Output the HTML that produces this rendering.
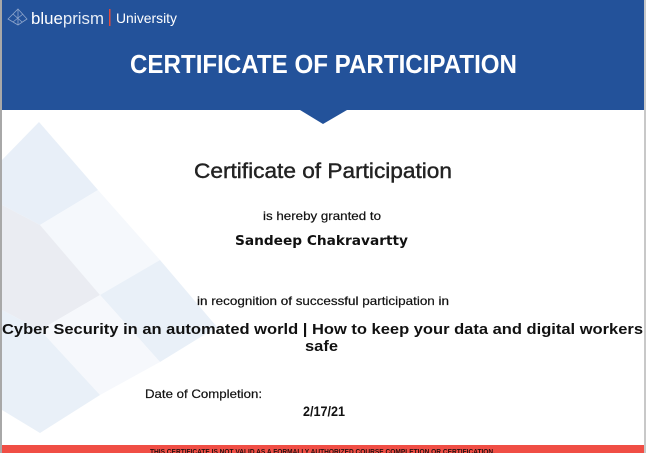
<!DOCTYPE html>
<html><head><meta charset="utf-8"><style>
html,body{margin:0;padding:0;background:#fff;width:646px;height:453px;overflow:hidden}
svg{display:block}
</style></head><body>
<svg width="646" height="453" viewBox="0 0 646 453" xmlns="http://www.w3.org/2000/svg">
<rect width="646" height="453" fill="#fff"/>
<polygon points="39,122 98,190 40,225 2,205 2,160" fill="#e8eff8"/>
<polygon points="98,190 160,260 100,295 40,225" fill="#f5f8fc"/>
<polygon points="2,205 40,225 100,295 40,330 2,310" fill="#eaecf2"/>
<polygon points="160,260 217,327 160,362 100,295" fill="#e9f0f8"/>
<polygon points="100,295 160,362 100,395 40,330" fill="#f6f8fc"/>
<polygon points="2,310 40,330 100,395 40,433 2,410" fill="#e9f0f8"/>
<rect x="0" y="0" width="2" height="453" fill="#a8a8a8"/>
<rect x="644" y="0" width="2" height="453" fill="#c8c8c8"/>
<rect x="2" y="0" width="642" height="110" fill="#23529a"/>
<polygon points="300,110 347,110 323,124" fill="#23529a"/>
<g stroke="#8fa6cc" stroke-width="0.8" fill="none">
<polygon points="18,9 27,19 18,25 8,19"/>
<line x1="18" y1="9" x2="18" y2="25"/><line x1="13" y1="14" x2="22" y2="22"/><line x1="23" y1="14" x2="13" y2="22"/>
</g>
<text x="31" y="24" font-family="Liberation Sans, sans-serif" font-size="17" fill="#fff" textLength="73" lengthAdjust="spacingAndGlyphs">blue<tspan fill="#e6ecf5">prism</tspan></text>
<rect x="109" y="9" width="1.5" height="17" fill="#e04a3f"/>
<text x="116" y="23" font-family="Liberation Sans, sans-serif" font-size="14" fill="#fff" textLength="61" lengthAdjust="spacingAndGlyphs">University</text>
<text x="130" y="73" font-family="Liberation Sans, sans-serif" font-weight="bold" font-size="26" fill="#fff" textLength="387" lengthAdjust="spacingAndGlyphs">CERTIFICATE OF  PARTICIPATION</text>
<text x="194" y="178" font-family="Liberation Sans, sans-serif" font-size="21" fill="#222" stroke="#222" stroke-width="0.4" textLength="258" lengthAdjust="spacingAndGlyphs">Certificate of Participation</text>
<text x="263" y="220" font-family="Liberation Sans, sans-serif" font-size="12" fill="#111" stroke="#111" stroke-width="0.2" textLength="118" lengthAdjust="spacingAndGlyphs">is hereby granted to</text>
<text x="235" y="245" font-family="DejaVu Sans, sans-serif" font-weight="bold" font-size="13" fill="#111" textLength="173" lengthAdjust="spacingAndGlyphs">Sandeep Chakravartty</text>
<text x="197" y="305" font-family="Liberation Sans, sans-serif" font-size="12" fill="#111" stroke="#111" stroke-width="0.2" textLength="252" lengthAdjust="spacingAndGlyphs">in recognition of successful participation in</text>
<text x="2" y="334" font-family="Liberation Sans, sans-serif" font-weight="bold" font-size="15" fill="#111" textLength="641" lengthAdjust="spacingAndGlyphs">Cyber Security in an automated world | How to keep your data and digital workers</text>
<text x="305" y="351" font-family="Liberation Sans, sans-serif" font-weight="bold" font-size="15" fill="#111" textLength="33" lengthAdjust="spacingAndGlyphs">safe</text>
<text x="145" y="398" font-family="Liberation Sans, sans-serif" font-size="12" fill="#111" stroke="#111" stroke-width="0.2" textLength="117" lengthAdjust="spacingAndGlyphs">Date of Completion:</text>
<text x="303" y="416" font-family="Liberation Sans, sans-serif" font-weight="bold" font-size="14" fill="#111" textLength="42" lengthAdjust="spacingAndGlyphs">2/17/21</text>
<rect x="2" y="445" width="642" height="8" fill="#f04e45"/>
<text x="150" y="454" font-family="Liberation Sans, sans-serif" font-weight="bold" font-size="7.5" fill="#2a1010" textLength="345" lengthAdjust="spacingAndGlyphs">THIS CERTIFICATE IS NOT VALID AS A FORMALLY AUTHORIZED COURSE COMPLETION OR CERTIFICATION.</text>
</svg>
</body></html>
